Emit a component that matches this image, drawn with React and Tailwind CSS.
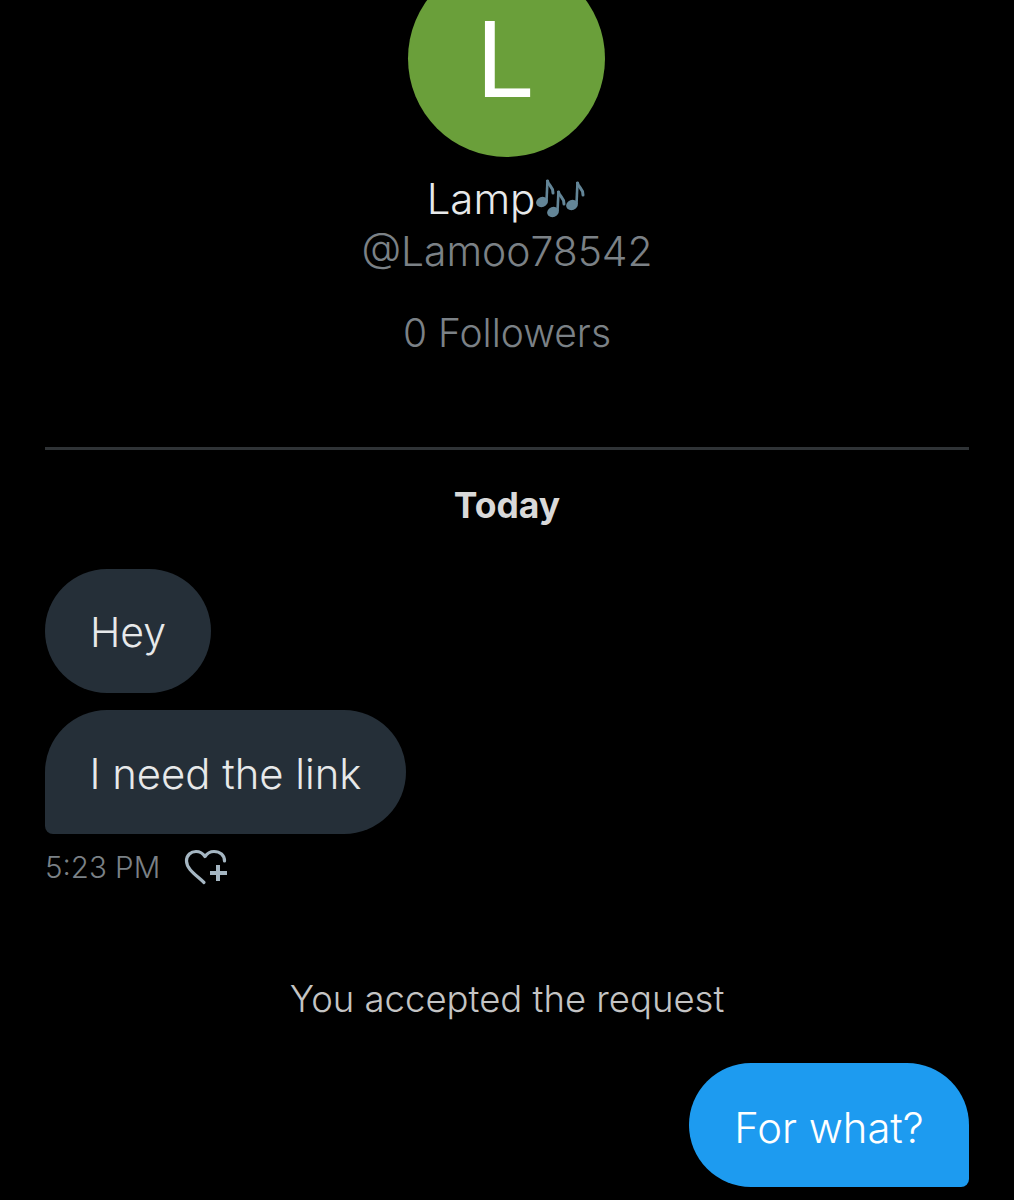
import React from "react";

function Note({ hx, hy, sx, ty, fx }) {
  return (
    <g>
      <ellipse cx={hx} cy={hy} rx="6" ry="5" transform={`rotate(-20 ${hx} ${hy})`} fill="#638597" />
      <path d={`M${sx} ${hy - 1} L${sx + 1} ${ty}`} stroke="#638597" strokeWidth="2.6" fill="none" />
      <path d={`M${sx + 1} ${ty + 1} C${sx + 2} ${ty + 6} ${fx} ${ty + 6} ${fx} ${ty + 13}`} stroke="#638597" strokeWidth="3" fill="none" strokeLinecap="round" />
    </g>
  );
}

function Notes() {
  return (
    <svg width="50" height="40" viewBox="0 0 50 40" className="shrink-0">
      <Note hx={7} hy={23} sx={11.500} ty={1} fx={18} />
      <Note hx={18} hy={33} sx={22.500} ty={12} fx={29} />
      <Note hx={37} hy={26} sx={41.500} ty={3} fx={48} />
    </svg>
  );
}

function HeartPlus() {
  return (
    <svg width="46" height="40" viewBox="0 0 46 40" fill="none" stroke="#a5b6c2" strokeLinejoin="round">
      <path d="M21 35.500 C13 28 3.500 22 3.500 14 C3.500 8 8 4.500 13 4.500 C17 4.500 20 6.500 22 9.500 C24 6.500 27 4.500 31 4.500 C37 4.500 41.500 8 41.500 14" strokeWidth="3.200" strokeLinecap="round" />
      <path d="M35 18 V34 M27 26 H44" strokeWidth="4" />
    </svg>
  );
}

export default function App() {
  return (
    <div className="w-[1014px] h-[1200px] overflow-hidden bg-black font-['Inter','Liberation_Sans',sans-serif]">
      <div className="flex flex-col items-center">
        <div className="-mt-[40px] mr-[2px] w-[197px] h-[197px] rounded-full bg-[#6a9f3a] flex items-center justify-center text-white text-[105px] font-normal leading-none">
          <span className="mr-[1px]">L</span>
        </div>
        <div className="mt-[17px] h-[50px] flex items-center text-[#e7e9ea] text-[42px] leading-[50px] font-[350] mr-[2px]">
          <span>Lamp</span>
          <Notes />
        </div>
        <div className="mt-[2px] h-[50px] text-[#7b8186] text-[40.800px] leading-[50px] font-[350]">@Lamoo78542</div>
        <div className="mt-[34px] h-[46px] text-[#7b8186] text-[39px] leading-[46px] font-[350]">0 Followers</div>
      </div>

      <div className="mx-[45px] mt-[91px] h-[3px] bg-[#2f3336]" />

      <div className="mt-[36px] text-center text-[#d9d9d9] text-[35.500px] leading-[40px] font-bold">Today</div>

      <div className="mx-[45px] mt-[43px] flex flex-col items-start">
        <div className="h-[124px] w-[166px] pt-[4px] rounded-[62px] bg-[#252f38] flex items-center justify-center text-[#e7e9ea] text-[41px] font-[350]">
          Hey
        </div>
        <div className="mt-[17px] h-[124px] w-[361px] pt-[4px] rounded-[62px] rounded-bl-[8px] bg-[#252f38] flex items-center justify-center text-[#e7e9ea] text-[41.800px] font-[350]">
          I need the link
        </div>
        <div className="mt-[13px] flex items-center gap-[23px] h-[40px]">
          <span className="text-[#7b8186] text-[29.500px] font-[350]">5:23 PM</span>
          <HeartPlus />
        </div>
      </div>

      <div className="mt-[89px] text-center text-[#c4c4c4] text-[36.500px] leading-[46px] font-[350]">You accepted the request</div>

      <div className="mx-[45px] mt-[41px] flex justify-end">
        <div className="h-[124px] w-[280px] pt-[6px] rounded-[62px] rounded-br-[8px] bg-[#1d9bf0] flex items-center justify-center text-white text-[41.800px] font-[350]">
          For what?
        </div>
      </div>
    </div>
  );
}
